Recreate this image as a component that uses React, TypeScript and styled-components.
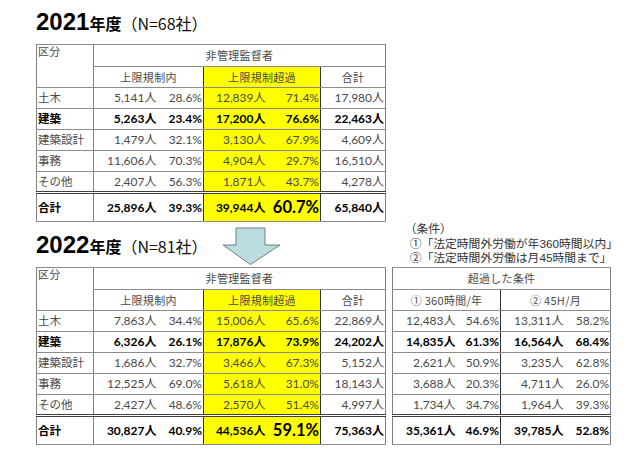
import styled, { createGlobalStyle } from 'styled-components'

const GlobalStyle = createGlobalStyle`
  html, body {
    margin: 0;
    padding: 0;
    background: #ffffff;
  }
  body {
    font-family: "Lato", "Noto Sans CJK JP", sans-serif;
  }
`

const Page = styled.div`
  width: 640px;
  height: 455px;
  padding: 8px 0 0 36px;
  box-sizing: border-box;
  overflow: hidden;
`

const Title = styled.h1`
  margin: 0 0 4px;
  height: 32px;
  display: flex;
  align-items: baseline;
  font-family: "Noto Sans CJK JP", sans-serif;
  color: #000;
  font-weight: 400;
  white-space: nowrap;
`

const Year = styled.span`
  font-family: "Liberation Sans", sans-serif;
  font-weight: 700;
  font-size: 24px;
`

const Nendo = styled.span`
  font-weight: 700;
  font-size: 16px;
`

const Count = styled.span`
  font-size: 16px;
  font-weight: 400;
  color: #111;
`

const Middle = styled.div`
  display: flex;
  align-items: flex-end;
  height: 45px;
`

const Arrow = styled.svg`
  flex: none;
  margin: 0 0 1px 14px;
`

const Conditions = styled.div`
  align-self: flex-start;
  margin: 0 0 0 123px;
  font-family: "Liberation Sans", "Noto Sans CJK JP", sans-serif;
  font-size: 11.8px;
  line-height: 14.5px;
  color: #333;
  white-space: nowrap;
`

const CondLine = styled.div<{ $indent?: boolean }>`
  padding-left: ${p => (p.$indent ? '5px' : '0')};
`

const Row = styled.div`
  display: flex;
  align-items: flex-start;
  gap: 6px;
`

const Table = styled.table<{ $width: number }>`
  width: ${p => p.$width}px;
  table-layout: fixed;
  border-collapse: collapse;
  border: 1px solid #7f7f7f;
  font-size: 12px;
  color: #4a4a4a;
`

const Tr = styled.tr<{ $h: number }>`
  height: ${p => p.$h}px;
`

const Cell = styled.td<{
  $align?: 'left' | 'right' | 'center'
  $yellow?: boolean
  $bold?: boolean
  $total?: boolean
  $leftDark?: boolean
  $leftGray?: boolean
  $big?: boolean
  $top?: boolean
}>`
  padding: ${p => (p.$top ? '1px 1px 0' : '0 1px')};
  text-align: ${p => p.$align || 'right'};
  vertical-align: ${p => (p.$top ? 'top' : 'middle')};
  background: ${p => (p.$yellow ? '#ffff00' : 'transparent')};
  font-weight: ${p => (p.$bold ? 700 : 400)};
  color: ${p => (p.$bold ? '#000' : '#4a4a4a')};
  font-size: ${p => (p.$big ? '16.5px' : '12px')};
  border-top: ${p => (p.$total ? '3px double #404040' : '1px solid #8c8c8c')};
  border-bottom: 1px solid #8c8c8c;
  border-left: ${p =>
    p.$leftDark ? '1px solid #333' : p.$leftGray ? '1px solid #7f7f7f' : 'none'};
  white-space: nowrap;
  overflow: hidden;
  line-height: 1;
`

const HeadCell = styled(Cell)`
  font-family: "Noto Sans CJK JP", sans-serif;
  font-size: 11px;
  letter-spacing: 0.3px;
  color: #4a4a4a;
`

const Label = styled(Cell)`
  font-family: "Noto Sans CJK JP", sans-serif;
  font-size: 11.5px;
`

type Line = {
  name: string
  a: [string, string]
  b: [string, string]
  sum: string
  c?: [string, string]
  d?: [string, string]
  bold?: boolean
  total?: boolean
}

const data2021: Line[] = [
  { name: '土木', a: ['5,141人', '28.6%'], b: ['12,839人', '71.4%'], sum: '17,980人' },
  { name: '建築', a: ['5,263人', '23.4%'], b: ['17,200人', '76.6%'], sum: '22,463人', bold: true },
  { name: '建築設計', a: ['1,479人', '32.1%'], b: ['3,130人', '67.9%'], sum: '4,609人' },
  { name: '事務', a: ['11,606人', '70.3%'], b: ['4,904人', '29.7%'], sum: '16,510人' },
  { name: 'その他', a: ['2,407人', '56.3%'], b: ['1,871人', '43.7%'], sum: '4,278人' },
  { name: '合計', a: ['25,896人', '39.3%'], b: ['39,944人', '60.7%'], sum: '65,840人', bold: true, total: true },
]

const data2022: Line[] = [
  { name: '土木', a: ['7,863人', '34.4%'], b: ['15,006人', '65.6%'], sum: '22,869人', c: ['12,483人', '54.6%'], d: ['13,311人', '58.2%'] },
  { name: '建築', a: ['6,326人', '26.1%'], b: ['17,876人', '73.9%'], sum: '24,202人', c: ['14,835人', '61.3%'], d: ['16,564人', '68.4%'], bold: true },
  { name: '建築設計', a: ['1,686人', '32.7%'], b: ['3,466人', '67.3%'], sum: '5,152人', c: ['2,621人', '50.9%'], d: ['3,235人', '62.8%'] },
  { name: '事務', a: ['12,525人', '69.0%'], b: ['5,618人', '31.0%'], sum: '18,143人', c: ['3,688人', '20.3%'], d: ['4,711人', '26.0%'] },
  { name: 'その他', a: ['2,427人', '48.6%'], b: ['2,570人', '51.4%'], sum: '4,997人', c: ['1,734人', '34.7%'], d: ['1,964人', '39.3%'] },
  { name: '合計', a: ['30,827人', '40.9%'], b: ['44,536人', '59.1%'], sum: '75,363人', c: ['35,361人', '46.9%'], d: ['39,785人', '52.8%'], bold: true, total: true },
]

const rowHeight = (l: Line) => (l.total ? 29 : 21)

const MainTable = ({ lines }: { lines: Line[] }) => (
  <Table $width={349}>
    <colgroup>
      <col style={{ width: 57 }} />
      <col style={{ width: 64 }} />
      <col style={{ width: 46 }} />
      <col style={{ width: 63 }} />
      <col style={{ width: 54 }} />
      <col style={{ width: 65 }} />
    </colgroup>
    <tbody>
      <Tr $h={22}>
        <HeadCell as="th" rowSpan={2} $align="left" $top>区分</HeadCell>
        <HeadCell as="th" colSpan={5} $align="center" $leftGray>非管理監督者</HeadCell>
      </Tr>
      <Tr $h={21}>
        <HeadCell as="th" colSpan={2} $align="center" $leftGray>上限規制内</HeadCell>
        <HeadCell as="th" colSpan={2} $align="center" $yellow $leftDark>上限規制超過</HeadCell>
        <HeadCell as="th" $align="center" $leftDark>合計</HeadCell>
      </Tr>
      {lines.map(l => (
        <Tr key={l.name} $h={rowHeight(l)}>
          <Label $align="left" $bold={l.bold} $total={l.total}>{l.name}</Label>
          <Cell $bold={l.bold} $total={l.total} $leftGray>{l.a[0]}</Cell>
          <Cell $bold={l.bold} $total={l.total}>{l.a[1]}</Cell>
          <Cell $bold={l.bold} $total={l.total} $yellow $leftDark>{l.b[0]}</Cell>
          <Cell $bold={l.bold} $big={l.total} $total={l.total} $yellow>{l.b[1]}</Cell>
          <Cell $bold={l.bold} $total={l.total} $leftDark>{l.sum}</Cell>
        </Tr>
      ))}
    </tbody>
  </Table>
)

const ExcessTable = ({ lines }: { lines: Line[] }) => (
  <Table $width={219}>
    <colgroup>
      <col style={{ width: 64 }} />
      <col style={{ width: 44 }} />
      <col style={{ width: 64 }} />
      <col style={{ width: 46 }} />
    </colgroup>
    <tbody>
      <Tr $h={22}>
        <HeadCell as="th" colSpan={4} $align="center">超過した条件</HeadCell>
      </Tr>
      <Tr $h={21}>
        <HeadCell as="th" colSpan={2} $align="center">① 360時間/年</HeadCell>
        <HeadCell as="th" colSpan={2} $align="center" $leftDark>② 45H/月</HeadCell>
      </Tr>
      {lines.map(l => (
        <Tr key={l.name} $h={rowHeight(l)}>
          <Cell $bold={l.bold} $total={l.total}>{l.c?.[0]}</Cell>
          <Cell $bold={l.bold} $total={l.total}>{l.c?.[1]}</Cell>
          <Cell $bold={l.bold} $total={l.total} $leftDark>{l.d?.[0]}</Cell>
          <Cell $bold={l.bold} $total={l.total}>{l.d?.[1]}</Cell>
        </Tr>
      ))}
    </tbody>
  </Table>
)

const DownArrow = () => (
  <Arrow width="60" height="39" viewBox="0 0 60 39">
    <path
      d="M14 1 H43 V18 H58 L28.5 37.5 L1 18 H14 Z"
      fill="#bcdde0"
      stroke="#6f7f82"
      strokeWidth="1"
    />
  </Arrow>
)

export default function App() {
  return (
    <Page>
      <GlobalStyle />
      <Title>
        <Year>2021</Year>
        <Nendo>年度</Nendo>
        <Count>（N=68社）</Count>
      </Title>
      <MainTable lines={data2021} />
      <Middle>
        <Title>
          <Year>2022</Year>
          <Nendo>年度</Nendo>
          <Count>（N=81社）</Count>
        </Title>
        <DownArrow />
        <Conditions>
          <CondLine>（条件）</CondLine>
          <CondLine $indent>①「法定時間外労働が年360時間以内」</CondLine>
          <CondLine $indent>②「法定時間外労働は月45時間まで」</CondLine>
        </Conditions>
      </Middle>
      <Row>
        <MainTable lines={data2022} />
        <ExcessTable lines={data2022} />
      </Row>
    </Page>
  )
}
